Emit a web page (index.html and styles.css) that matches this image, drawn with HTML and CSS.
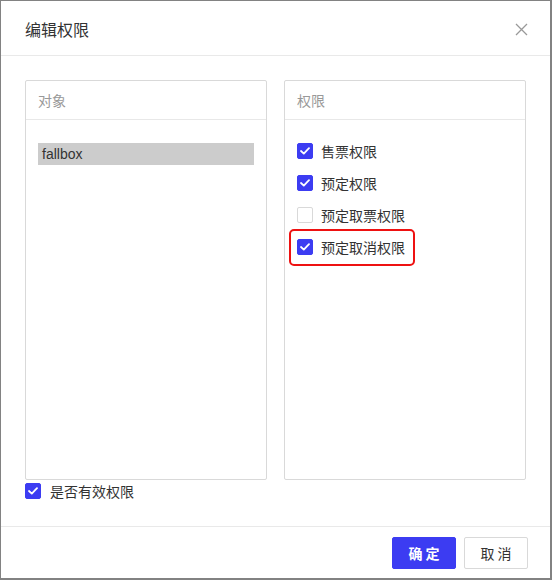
FILE: index.html
```html
<!DOCTYPE html>
<html lang="zh">
<head>
<meta charset="utf-8">
<title>编辑权限</title>
<link rel="stylesheet" href="styles.css">
</head>
<body>
<div class="modal">
  <div class="modal-header">
    <span class="modal-title">编辑权限</span>
    <span class="close" aria-label="关闭">
      <svg width="13" height="13" viewBox="0 0 13 13"><path d="M1 1L12 12M12 1L1 12" stroke="#999" stroke-width="1.3" fill="none"/></svg>
    </span>
  </div>
  <div class="modal-body">
    <div class="panels">
      <div class="panel">
        <div class="panel-head">对象</div>
        <div class="panel-body">
          <div class="obj-item">fallbox</div>
        </div>
      </div>
      <div class="panel">
        <div class="panel-head">权限</div>
        <div class="panel-body perm-list">
          <label class="check-row"><span class="cb checked"><svg width="10" height="8" viewBox="0 0 10 8"><path d="M1 4L3.8 6.6L9 1.2" stroke="#fff" stroke-width="1.8" fill="none" stroke-linecap="round" stroke-linejoin="round"/></svg></span><span class="lbl">售票权限</span></label>
          <label class="check-row"><span class="cb checked"><svg width="10" height="8" viewBox="0 0 10 8"><path d="M1 4L3.8 6.6L9 1.2" stroke="#fff" stroke-width="1.8" fill="none" stroke-linecap="round" stroke-linejoin="round"/></svg></span><span class="lbl">预定权限</span></label>
          <label class="check-row"><span class="cb"></span><span class="lbl">预定取票权限</span></label>
          <label class="check-row highlighted"><span class="cb checked"><svg width="10" height="8" viewBox="0 0 10 8"><path d="M1 4L3.8 6.6L9 1.2" stroke="#fff" stroke-width="1.8" fill="none" stroke-linecap="round" stroke-linejoin="round"/></svg></span><span class="lbl">预定取消权限</span><span class="mark"></span></label>
        </div>
      </div>
    </div>
    <label class="check-row valid"><span class="cb checked"><svg width="10" height="8" viewBox="0 0 10 8"><path d="M1 4L3.8 6.6L9 1.2" stroke="#fff" stroke-width="1.8" fill="none" stroke-linecap="round" stroke-linejoin="round"/></svg></span><span class="lbl">是否有效权限</span></label>
  </div>
  <div class="modal-footer">
    <button class="btn primary">确 定</button>
    <button class="btn">取 消</button>
  </div>
</div>
</body>
</html>
```

FILE: styles.css
```css
html, body {
  margin: 0;
  padding: 0;
}
body {
  background: #828282;
  width: 552px;
  height: 580px;
  overflow: hidden;
  font-family: "Noto Sans CJK SC", "Noto Sans", sans-serif;
  font-size: 14px;
  color: #333;
}
.modal {
  margin: 1px 0 0 1px;
  width: 549px;
  height: 577px;
  background: #fff;
  display: flex;
  flex-direction: column;
}
.modal-header {
  height: 54px;
  border-bottom: 1px solid #e9e9e9;
  display: flex;
  align-items: center;
  justify-content: space-between;
  padding: 0 22px 0 24px;
  box-sizing: content-box;
  flex: none;
}
.modal-title {
  font-size: 16px;
  color: #333;
  line-height: 22px;
  margin-top: 1px;
}
.close {
  display: flex;
  margin-top: 3px;
}
.modal-body {
  flex: 1;
  padding: 24px 24px 0 24px;
}
.panels {
  display: flex;
  gap: 17px;
}
.panel {
  width: 242px;
  height: 400px;
  box-sizing: border-box;
  border: 1px solid #d9d9d9;
  border-radius: 2px;
}
.panel-head {
  height: 38px;
  border-bottom: 1px solid #e8e8e8;
  padding-left: 12px;
  line-height: 38px;
  color: #999;
  font-size: 14px;
}
.panel-body {
  padding: 23px 12px 0 12px;
}
.obj-item {
  height: 22px;
  line-height: 22px;
  background: #cccccc;
  padding-left: 4px;
  color: #333;
  font-family: "Liberation Sans", "Noto Sans CJK SC", sans-serif;
  font-size: 14px;
}
.perm-list {
  display: flex;
  flex-direction: column;
  gap: 10px;
  padding-top: 20px;
}
.check-row {
  display: flex;
  align-items: center;
  height: 22px;
  position: relative;
}
.cb {
  width: 16px;
  height: 16px;
  box-sizing: border-box;
  border: 1px solid #d9d9d9;
  border-radius: 2px;
  background: #fff;
  display: flex;
  align-items: center;
  justify-content: center;
  flex: none;
}
.cb.checked {
  background: #3c3cf2;
  border-color: #3c3cf2;
}
.lbl {
  margin-left: 8px;
  color: #333;
  font-size: 14px;
}
.mark {
  position: absolute;
  left: -8px;
  top: -7px;
  width: 126px;
  height: 37px;
  box-sizing: border-box;
  border: 2px solid #ee1111;
  border-radius: 5px;
}
.valid {
  margin-top: 0;
}
.valid .lbl {
  margin-left: 9px;
}
.modal-footer {
  border-top: 1px solid #e9e9e9;
  height: 52px;
  flex: none;
  display: flex;
  justify-content: flex-end;
  align-items: flex-start;
  gap: 8px;
  padding: 10px 22px 0 0;
  box-sizing: border-box;
}
.btn {
  width: 64px;
  height: 32px;
  border: 1px solid #d9d9d9;
  border-radius: 2px;
  background: #fff;
  color: #333;
  font-family: "Noto Sans CJK SC", sans-serif;
  font-size: 14px;
  padding: 0;
}
.btn.primary {
  background: #3c3cf2;
  border-color: #3c3cf2;
  color: #fff;
  font-weight: bold;
}
```
